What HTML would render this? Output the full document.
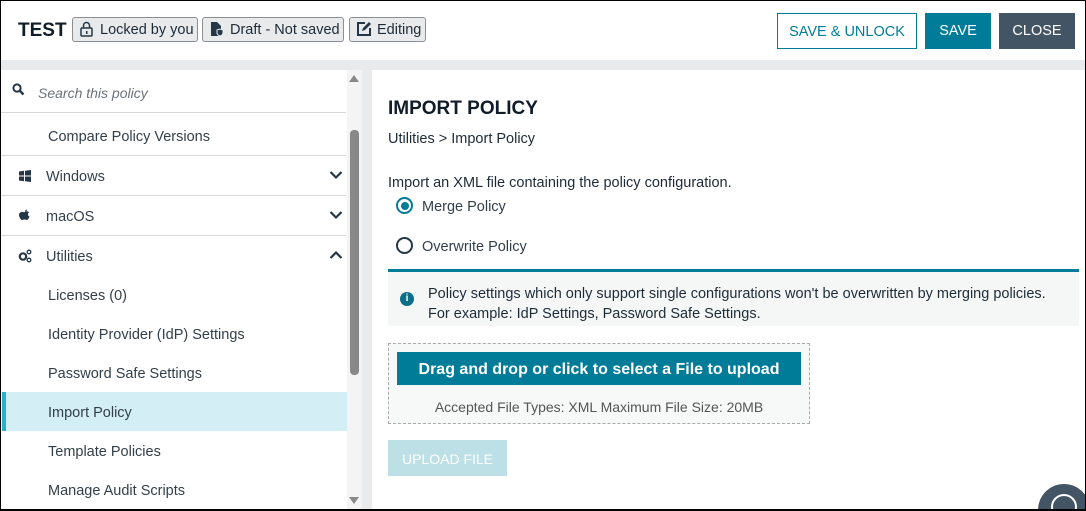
<!DOCTYPE html>
<html><head><meta charset="utf-8"><style>
*{box-sizing:border-box;margin:0;padding:0}
html,body{width:1086px;height:511px;overflow:hidden}
body{font-family:"Liberation Sans",sans-serif;color:#253746;background:#fff}
#w{position:relative;width:1086px;height:511px;overflow:hidden}
.frame{position:absolute;left:0;top:0;width:1086px;height:511px;border:1px solid #000;border-bottom-width:2px;pointer-events:none;z-index:10}
.a{position:absolute}
.t{position:absolute;padding-top:2px;white-space:nowrap}
.tag{position:absolute;top:17px;height:25px;border:1px solid #8a8f94;border-radius:3px;background:#e9eaec;font-size:14.5px;line-height:25px;padding-left:27px;color:#1e2b36;white-space:nowrap;overflow:hidden}
.btn{position:absolute;top:13px;height:36px;font-size:14.5px;line-height:37px;text-align:center}
.nav{position:absolute;left:1px;width:300px;font-size:14.5px;color:#333f48;padding-top:2px}
.line{position:absolute;left:1px;width:345px;height:1px;background:#d8d8d8}
</style></head><body><div id="w">
<div class="frame"></div>
<div class="t" style="left:18px;top:18px;font-size:19px;font-weight:bold;color:#101c27">TEST</div>
<div class="tag" style="left:72px;width:126px">
<svg class="a" style="left:7px;top:3px" width="13" height="16" viewBox="0 0 13 16"><rect x="1" y="7" width="11" height="8" rx="1" fill="none" stroke="#253746" stroke-width="1.5"/><path d="M3.5 7V4.5a3 3 0 0 1 6 0V7" fill="none" stroke="#253746" stroke-width="1.5"/><rect x="6" y="10" width="1.5" height="3" fill="#253746"/></svg>Locked by you</div>
<div class="tag" style="left:202px;width:142px">
<svg class="a" style="left:7px;top:3px" width="13" height="16" viewBox="0 0 13 16"><path d="M1 1h6l4 4v10H1z" fill="#253746"/><path d="M7 9l3 -1 3 1v2.5c0 2-1.5 3-3 3.5-1.5-.5-3-1.5-3-3.5z" fill="#253746" stroke="#e9eaec" stroke-width="1"/></svg>Draft - Not saved</div>
<div class="tag" style="left:349px;width:77px">
<svg class="a" style="left:6px;top:3px" width="16" height="16" viewBox="0 0 16 16"><path d="M9 2H2v12h12V7" fill="none" stroke="#253746" stroke-width="2"/><path d="M6 10l1-3 6-6 2 2-6 6z" fill="#253746"/></svg>Editing</div>
<div class="btn" style="left:777px;width:140px;border:1px solid #007c99;color:#007c99">SAVE &amp; UNLOCK</div>
<div class="btn" style="left:925px;width:66px;background:#007c99;color:#fff">SAVE</div>
<div class="btn" style="left:999px;width:76px;background:#435565;color:#fff">CLOSE</div>
<div class="a" style="left:0;top:60px;width:1086px;height:451px;background:#e9eaec"></div>
<div class="a" style="left:1px;top:70px;width:361px;height:441px;background:#fff"></div>
<div class="a" style="left:347px;top:70px;width:15px;height:441px;background:#f4f4f4"></div>
<div class="a" style="left:350px;top:130px;width:9px;height:245px;background:#888;border-radius:4px"></div>
<div class="a" style="left:349px;top:75px;border:5px solid transparent;border-bottom:7px solid #888;border-top:0"></div>
<div class="a" style="left:349px;top:497px;border:5px solid transparent;border-top:7px solid #888;border-bottom:0"></div>
<svg class="a" style="left:12px;top:83px" width="13" height="13" viewBox="0 0 13 13"><circle cx="5" cy="5" r="3.6" fill="none" stroke="#253746" stroke-width="2"/><path d="M8 8l3.5 3.5" stroke="#253746" stroke-width="2.4"/></svg>
<div class="t" style="left:38px;top:83px;font-size:14px;font-style:italic;color:#6c737a">Search this policy</div>
<div class="line" style="top:112px"></div>
<div class="nav" style="top:127px;left:48px">Compare Policy Versions</div>
<div class="line" style="top:155px"></div>
<svg class="a" style="left:19px;top:170px" width="12" height="12" viewBox="0 0 12 12"><path d="M0 1.5l5-.7V5.5H0zM6 .7l6-.7v5.5H6zM0 6.5h5v4.7l-5-.7zM6 6.5h6V12l-6-.8z" fill="#253746"/></svg>
<div class="nav" style="top:167px;left:46px">Windows</div>
<div class="line" style="top:195px"></div>
<svg class="a" style="left:19px;top:209px" width="11" height="12" viewBox="0 0 11 12"><path d="M6 3c1-1 3-1 4 .5-1.5 1-1.5 3 .5 4-.5 1.5-1.5 3.5-2.5 3.5S7 10.5 5.5 10.5 4 11 3 11 0 8 0 6s1.5-3 3-3 2 .5 3 0zM6 2.5c0-1 .8-2 2-2 0 1-.8 2-2 2z" fill="#253746"/></svg>
<div class="nav" style="top:207px;left:46px">macOS</div>
<div class="line" style="top:235px"></div>
<svg class="a" style="left:18px;top:249px" width="14" height="14" viewBox="0 0 14 14"><circle cx="5" cy="7.5" r="3.2" fill="none" stroke="#253746" stroke-width="2.2"/><circle cx="11" cy="3" r="1.8" fill="none" stroke="#253746" stroke-width="1.3"/><circle cx="11" cy="11" r="1.8" fill="none" stroke="#253746" stroke-width="1.3"/></svg>
<div class="nav" style="top:247px;left:46px">Utilities</div>
<svg class="a" style="left:329px;top:170px" width="14" height="10" viewBox="0 0 14 10"><path d="M1.5 2l5.5 5.5L12.5 2" fill="none" stroke="#253746" stroke-width="2.2"/></svg>
<svg class="a" style="left:329px;top:210px" width="14" height="10" viewBox="0 0 14 10"><path d="M1.5 2l5.5 5.5L12.5 2" fill="none" stroke="#253746" stroke-width="2.2"/></svg>
<svg class="a" style="left:329px;top:250px" width="14" height="10" viewBox="0 0 14 10"><path d="M1.5 8L7 2.5 12.5 8" fill="none" stroke="#253746" stroke-width="2.2"/></svg>
<div class="nav" style="top:286px;left:48px">Licenses (0)</div>
<div class="nav" style="top:325px;left:48px">Identity Provider (IdP) Settings</div>
<div class="nav" style="top:364px;left:48px">Password Safe Settings</div>
<div class="a" style="left:2px;top:392px;width:345px;height:39px;background:#d3eef4;border-left:4px solid #2ab0cf"></div>
<div class="nav" style="top:403px;left:48px">Import Policy</div>
<div class="nav" style="top:442px;left:48px">Template Policies</div>
<div class="nav" style="top:481px;left:48px">Manage Audit Scripts</div>
<div class="a" style="left:372px;top:70px;width:713px;height:441px;background:#fff"></div>
<div class="t" style="left:388px;top:96px;font-size:19px;font-weight:bold;color:#101c27">IMPORT POLICY</div>
<div class="t" style="left:388px;top:129px;font-size:14.5px;color:#1e2b36">Utilities &gt; Import Policy</div>
<div class="t" style="left:388px;top:173px;font-size:14.5px;color:#1e2b36">Import an XML file containing the policy configuration.</div>
<div class="a" style="left:396px;top:197px;width:17px;height:17px;border:2px solid #007c99;border-radius:50%"><div class="a" style="left:2.5px;top:2.5px;width:8px;height:8px;border-radius:50%;background:#007c99"></div></div>
<div class="t" style="left:422px;top:197px;font-size:14.5px;color:#333f48">Merge Policy</div>
<div class="a" style="left:396px;top:237px;width:17px;height:17px;border:2px solid #253746;border-radius:50%"></div>
<div class="t" style="left:422px;top:237px;font-size:14.5px;color:#333f48">Overwrite Policy</div>
<div class="a" style="left:388px;top:269px;width:691px;height:57px;background:#f5f7f7;border-top:3px solid #007c99"></div>
<div class="a" style="left:400px;top:292px;width:14px;height:14px;border-radius:50%;background:#0c6e87;color:#fff;font-size:10px;font-weight:bold;text-align:center;line-height:14px">i</div>
<div class="t" style="left:428px;top:282px;font-size:14.5px;line-height:20px;color:#1e2b36">Policy settings which only support single configurations won't be overwritten by merging policies.<br>For example: IdP Settings, Password Safe Settings.</div>
<div class="a" style="left:388px;top:343px;width:422px;height:81px;border:1px dashed #aaa;background:#f7f8f8"></div>
<div class="a" style="left:397px;top:352px;width:404px;height:33px;background:#007c99;color:#fff;font-size:16px;font-weight:bold;text-align:center;line-height:35px">Drag and drop or click to select a File to upload</div>
<div class="t" style="left:388px;top:397px;width:422px;text-align:center;font-size:14px;color:#555">Accepted File Types: XML Maximum File Size: 20MB</div>
<div class="a" style="left:388px;top:440px;width:119px;height:36px;background:#bddfe6;color:#fff;font-size:14px;text-align:center;line-height:38px">UPLOAD FILE</div>
<div class="a" style="left:1038px;top:484px;width:52px;height:52px;border-radius:50%;background:#435565"><div class="a" style="left:13px;top:10px;width:26px;height:26px;border:2px solid #fff;border-radius:50%"></div></div>
</div></body></html>
